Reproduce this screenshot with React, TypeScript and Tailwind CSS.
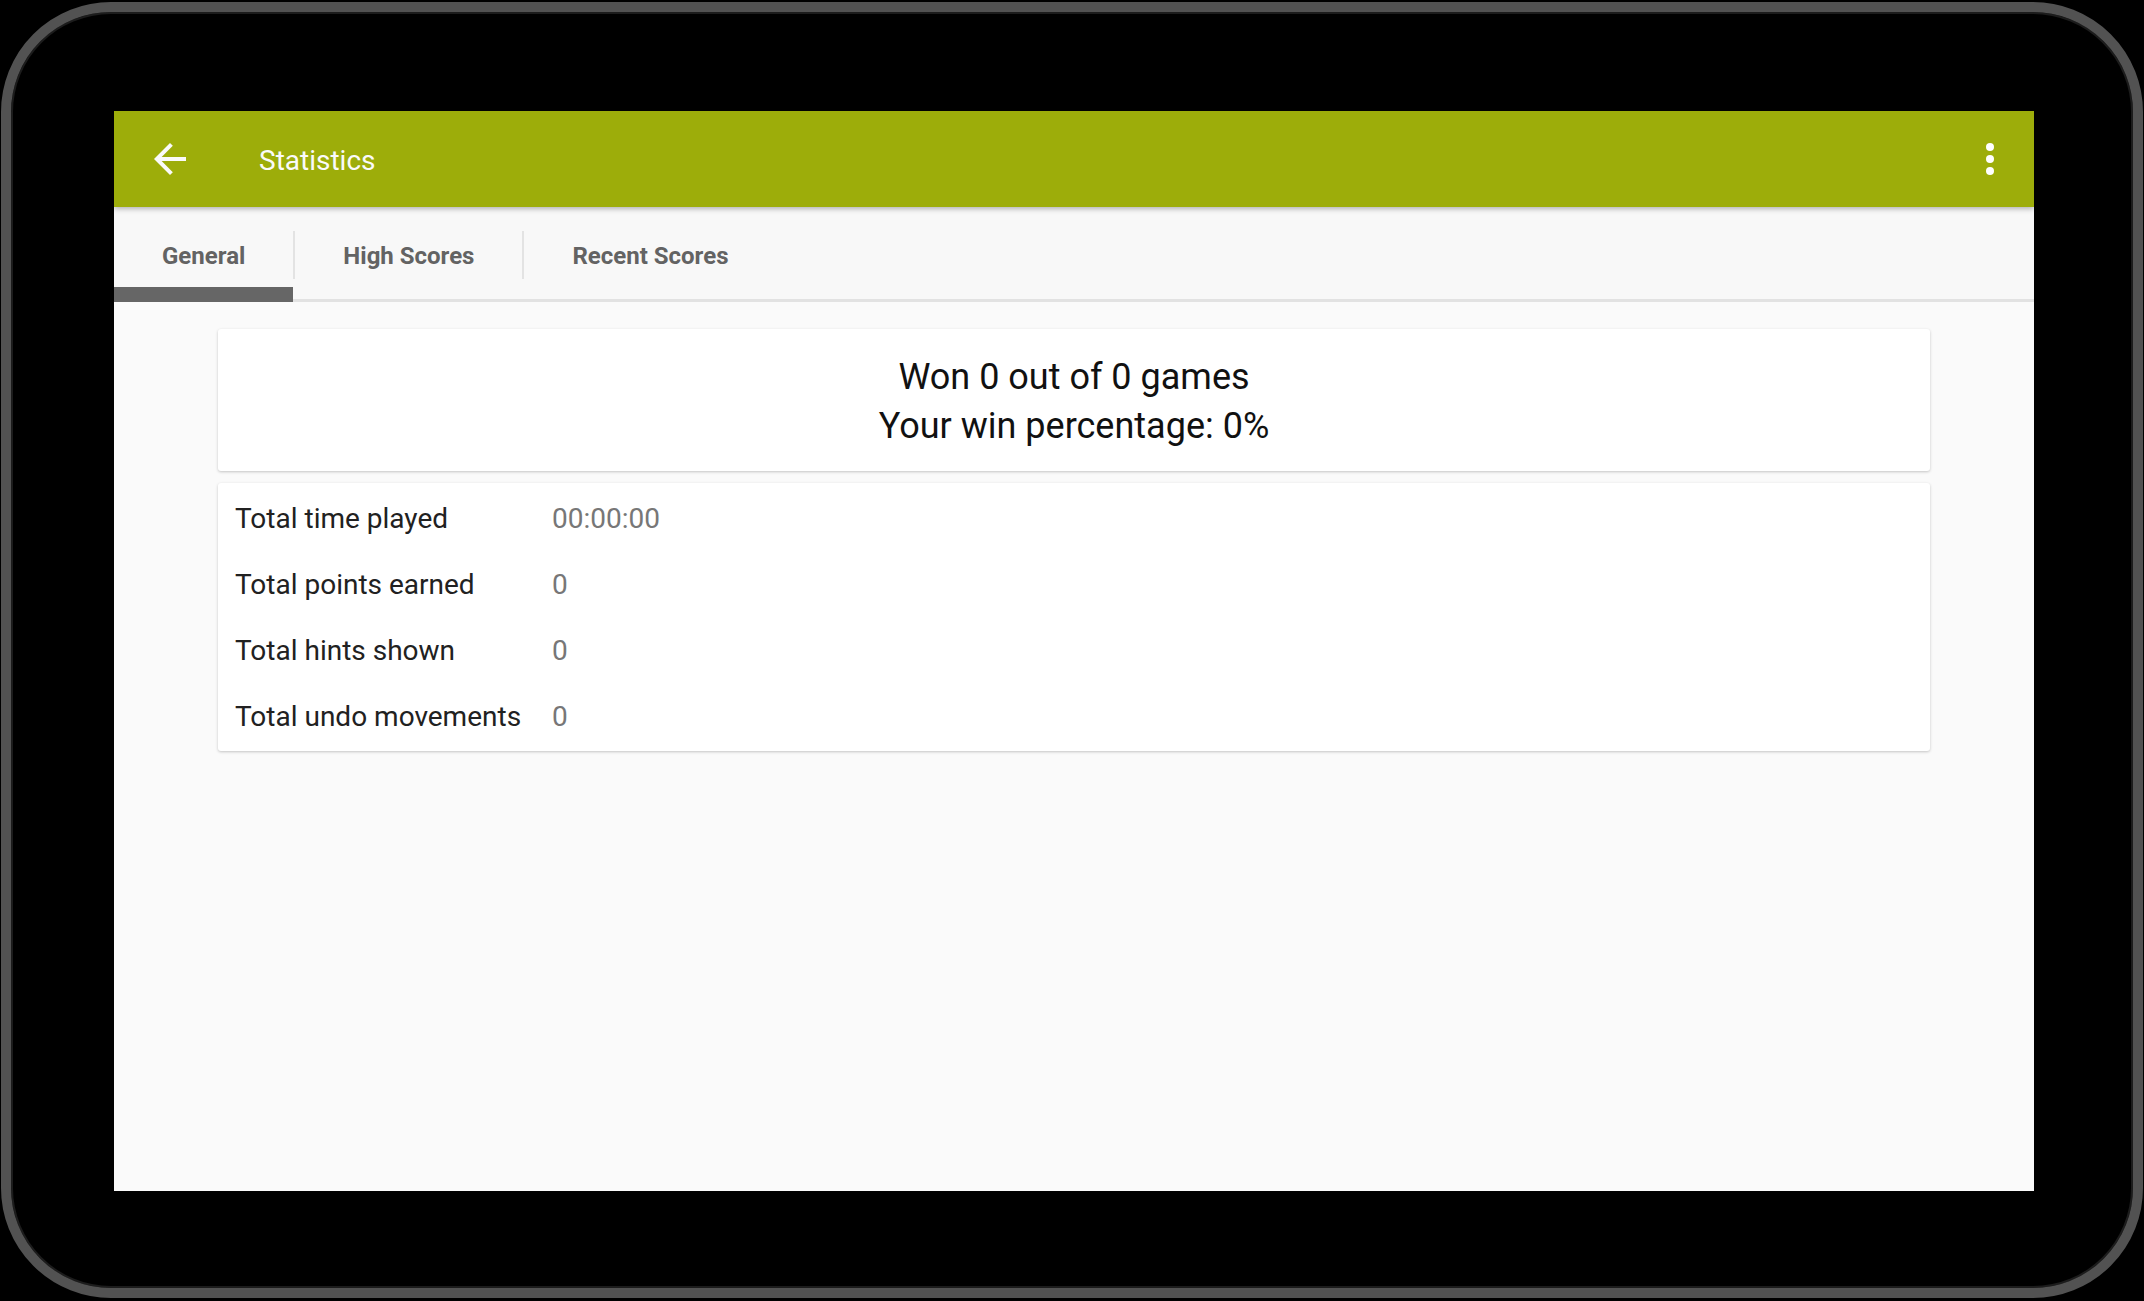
import React, { useState } from 'react';

type TabKey = 'general' | 'high' | 'recent';

const tabs: { key: TabKey; label: string }[] = [
  { key: 'general', label: 'General' },
  { key: 'high', label: 'High Scores' },
  { key: 'recent', label: 'Recent Scores' },
];

const stats = [
  { label: 'Total time played', value: '00:00:00' },
  { label: 'Total points earned', value: '0' },
  { label: 'Total hints shown', value: '0' },
  { label: 'Total undo movements', value: '0' },
];

const BackArrow = () => (
  <svg viewBox="0 0 24 24" className="h-[48px] w-[48px]" fill="#fafafa">
    <path d="M20 11H7.83l5.59-5.59L12 4l-8 8 8 8 1.41-1.41L7.83 13H20v-2z" />
  </svg>
);

const MoreIcon = () => (
  <div className="flex h-[48px] w-[48px] flex-col items-center justify-center gap-[4px]">
    <span className="h-[8px] w-[8px] rounded-full bg-white" />
    <span className="h-[8px] w-[8px] rounded-full bg-white" />
    <span className="h-[8px] w-[8px] rounded-full bg-white" />
  </div>
);

const App: React.FC = () => {
  const [active, setActive] = useState<TabKey>('general');

  return (
    <div className="flex h-[1301px] w-[2144px] bg-black pt-[2px] pr-[1px] pb-[3px] pl-[1px] font-['Roboto',sans-serif]">
      <div className="flex flex-1 rounded-[110px] border-[10px] border-[#525252] pt-[99px] pr-[99px] pb-[97px] pl-[103px] shadow-[inset_0_0_0_2px_#1c1c1c]">
        <div className="flex h-[1080px] w-[1920px] flex-col bg-[#fafafa]">
          {/* app bar */}
          <div className="relative z-10 flex h-[96px] items-center bg-[#9dad0a] pl-[32px] pr-[20px] shadow-[0_2px_5px_rgba(0,0,0,0.28)]">
            <BackArrow />
            <h1 className="ml-[65px] mt-[4px] text-[28px] leading-none text-[#fafafa]">Statistics</h1>
            <div className="ml-auto">
              <MoreIcon />
            </div>
          </div>

          {/* tabs */}
          <div className="flex h-[95px] items-stretch bg-[#f8f8f8] shadow-[inset_0_-3px_0_#e2e2e2]">
            {tabs.map((tab, i) => (
              <React.Fragment key={tab.key}>
                {i > 0 && <div className="h-[48px] w-[2px] self-center bg-[#e3e3e3]" />}
                <button
                  onClick={() => setActive(tab.key)}
                  className="relative flex items-center px-[48px] pt-[2px] text-[24px] font-bold text-[#636363]"
                >
                  {tab.label}
                  {active === tab.key && (
                    <span className="absolute bottom-0 left-0 right-0 h-[15px] bg-[#666666]" />
                  )}
                </button>
              </React.Fragment>
            ))}
          </div>

          {/* content */}
          <div className="flex flex-col gap-[12px] px-[104px] pt-[27px]">
            <div className="flex h-[142px] flex-col items-center rounded-[3px] bg-white pt-[24px] text-[36px] leading-[49px] text-[#111111] shadow-[0_1px_3px_rgba(0,0,0,0.22)]">
              <p>Won 0 out of 0 games</p>
              <p>Your win percentage: 0%</p>
            </div>

            <div className="grid grid-cols-[auto_1fr] gap-x-[31px] rounded-[3px] bg-white pt-[3px] pb-[1px] pl-[17px] shadow-[0_1px_3px_rgba(0,0,0,0.22)]">
              {stats.map((s) => (
                <React.Fragment key={s.label}>
                  <div className="flex h-[66px] items-center text-[28px] text-[#212121]">{s.label}</div>
                  <div className="flex h-[66px] items-center text-[28px] text-[#777777]">{s.value}</div>
                </React.Fragment>
              ))}
            </div>
          </div>
        </div>
      </div>
    </div>
  );
};

export default App;
